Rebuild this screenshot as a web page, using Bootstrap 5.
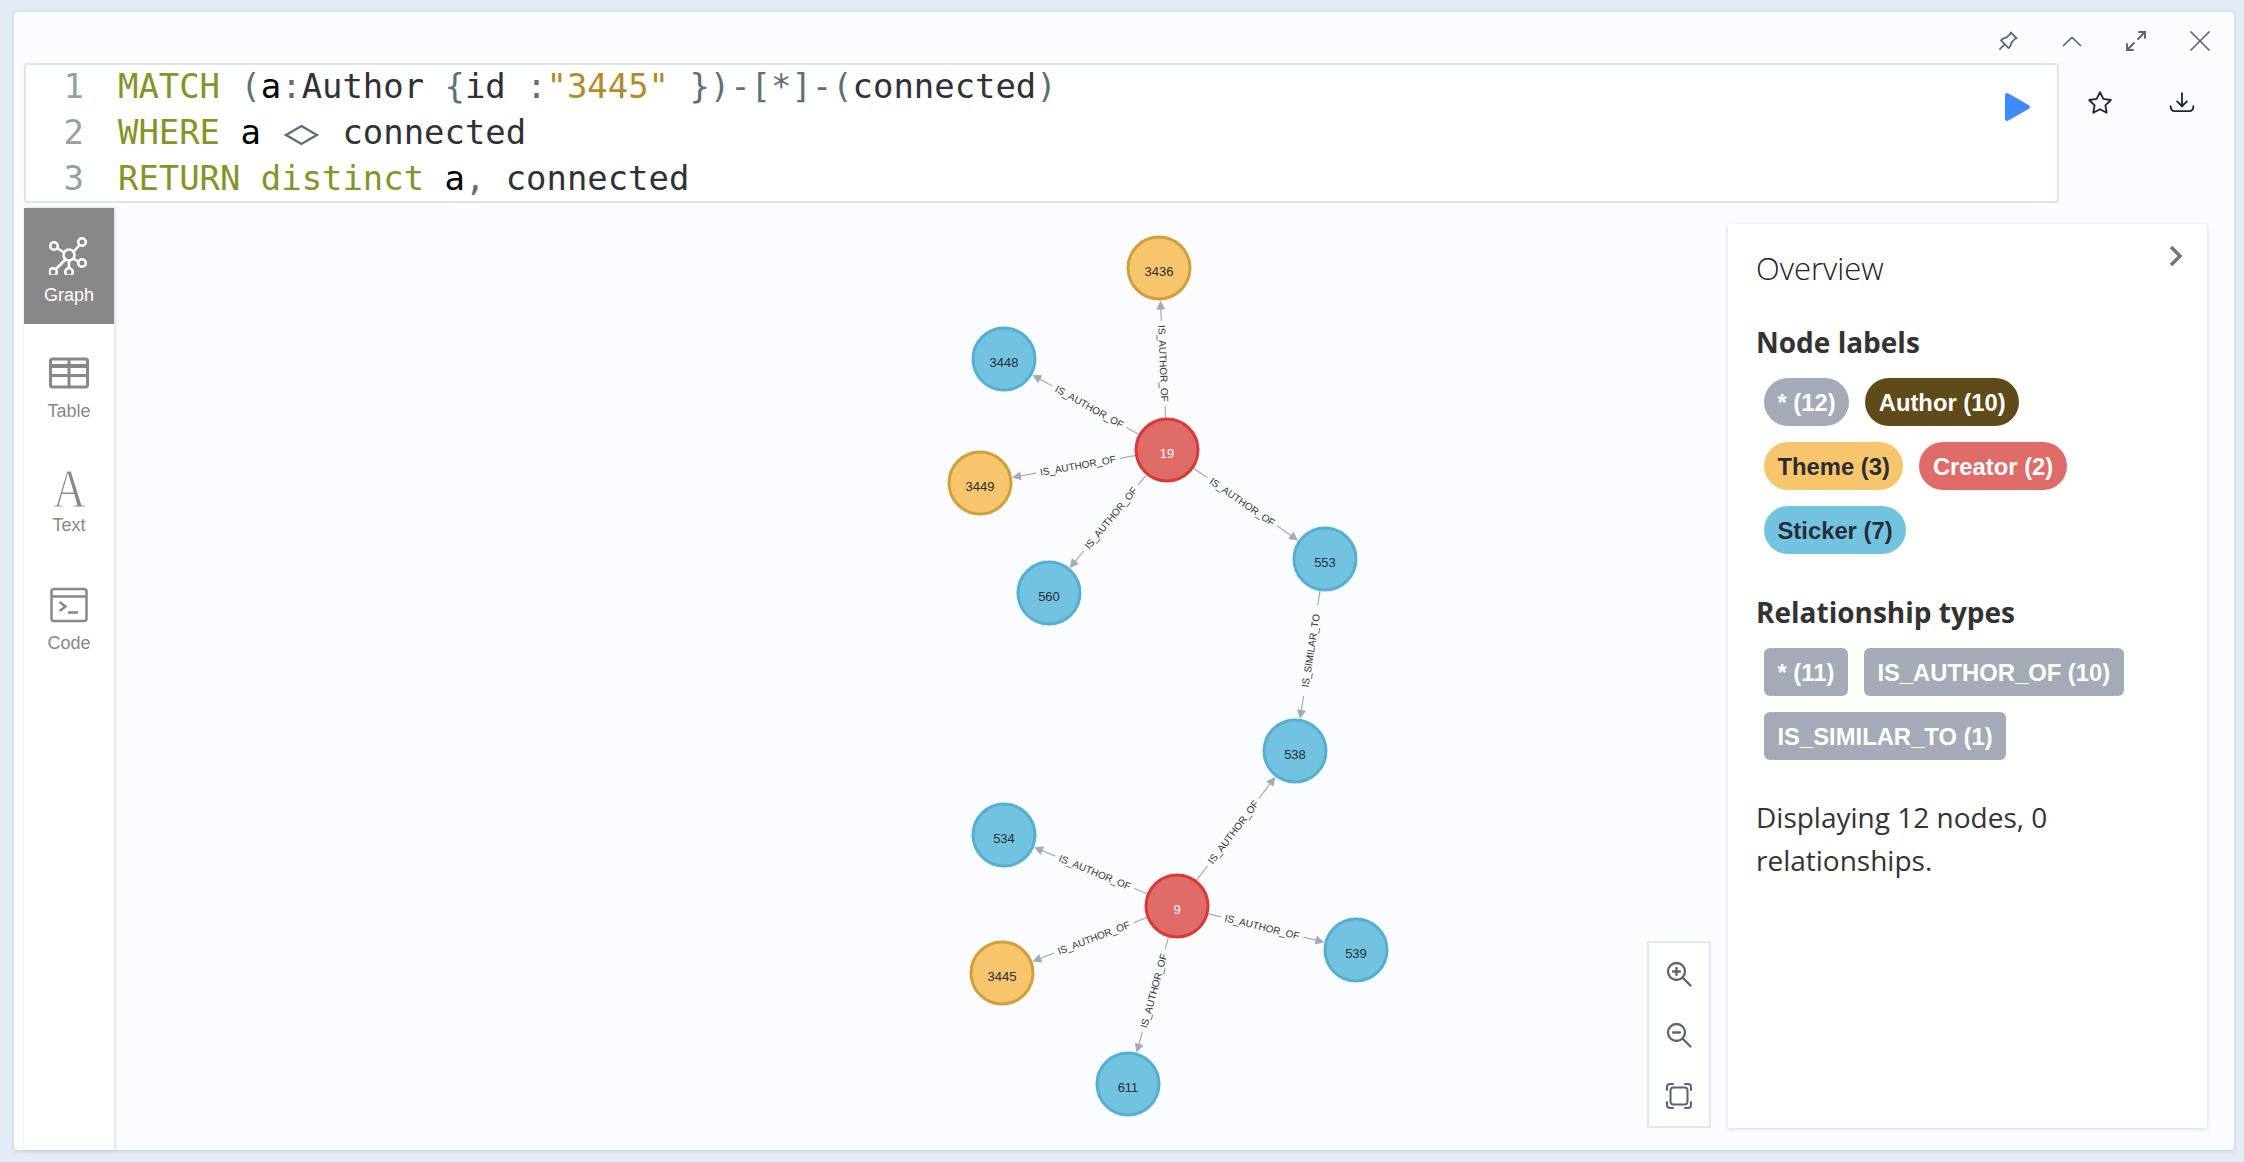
<!DOCTYPE html>
<html lang="en">
<head>
<meta charset="UTF-8">
<title>Neo4j Browser</title>
<link rel="stylesheet" href="https://cdn.jsdelivr.net/npm/bootstrap@5.3.3/dist/css/bootstrap.min.css">
<style>
  html, body { height: 100%; }
  body { background: #e3ebf4; overflow: hidden; padding: 12px 10px 12px 14px; font-family: "Open Sans", sans-serif; color: #303236; }
  .frame { height: 1138px; background: #fbfcff; border-radius: 4px; box-shadow: 0 1px 4px rgba(120, 140, 170, .3); }
  .top-bar { height: 51px; padding-right: 2px; }
  .top-btn { width: 64px; height: 51px; padding-top: 7px; color: #5b6470; }
  .editor-row { height: 140px; }
  .editor { width: 2035px; margin-left: 10px; height: 140px; background: #fff; border: 2px solid #dbe5f0; border-radius: 3px; overflow: hidden; font-family: "DejaVu Sans Mono", monospace; font-size: 33.9px; line-height: 46px; white-space: pre; }
  .code-col { margin-top: -1px; }
  .gutter { width: 58px; text-align: right; color: #93a1a1; margin-right: 34px; }
  .run-btn { width: 76px; padding-top: 26px; padding-right: 4px; }
  .tk-k { color: #859426; }
  .tk-s { color: #b58a2a; }
  .tk-p { color: #5d7078; }
  .tk-v { color: #000; }
  .tk-t { color: #2f3136; }
  .side-actions { width: 175px; }
  .side-btn { width: 82px; height: 80px; color: #1f2630; }
  .body-row { margin-top: 5px; height: 942px; }
  .side-nav { width: 90px; margin-left: 10px; background: #fff; box-shadow: 1px 0 3px rgba(120, 140, 170, .3); }
  .side-tab { height: 116px; padding-top: 27px; color: #888; font-family: "Liberation Sans", sans-serif; font-size: 18px; line-height: 20px; }
  .side-tab.on { background: #888; color: #fff; }
  .side-tab svg { display: block; }
  .tab-lbl { margin-top: 10px; }
  .glyph-a { height: 40px; font-family: "Liberation Serif", serif; font-size: 54px; line-height: 44px; -webkit-text-stroke: .9px #fff; transform: scaleX(.84); }
  .glyph-a + .tab-lbl { margin-top: 8px; }
  .canvas-area { min-width: 0; }
  .graph-svg { position: absolute; left: 0; top: 0; width: 100%; height: 100%; }
  .zoom-bar { position: absolute; right: 17px; bottom: 22px; width: 64px; height: 187px; background: #fff; border: 2px solid #dfe7f1; padding: 0; }
  .zoom-bar > div { height: 62px; color: #5b6470; }
  .overview { width: 479px; margin: 16px 27px 22px 0; background: #fff; border: 0; border-radius: 0; box-shadow: 0 1px 4px rgba(120, 140, 170, .3); padding: 24px 40px 0 28px; }
  .ov-title { font-size: 31px; font-weight: 300; line-height: 40px; margin: 0; color: #222; }
  .ov-head { font-size: 28px; font-weight: 700; line-height: 36px; margin: 0; color: #333; }
  .first-head { margin-top: 36px; }
  .second-head { margin-top: 40px; }
  .pill-wrap { margin: 18px 0 0 8px; gap: 16px; }
  .tag-pill { font-family: "Liberation Sans", sans-serif; font-size: 23.8px; font-weight: 700; line-height: 49px; height: 48px; padding: 0 13.5px; border-radius: 24px; white-space: nowrap; }
  .tag-rel { border-radius: 6px; }
  .c-grey { background: #a5abb6; color: #fff; }
  .c-brown { background: #5f4a1a; color: #fff; }
  .c-orange { background: #f7c56b; color: #2a2c34; }
  .c-red { background: #e06c6a; color: #fff; }
  .c-blue { background: #72c3e0; color: #2a2c34; }
  .ov-note { font-size: 28px; line-height: 43px; margin: 36px 0 0; color: #333; }
  .ov-toggle { position: absolute; right: 23px; top: 20px; color: #777; }
</style>
</head>
<body>
<main class="frame d-flex flex-column">
  <!-- window buttons -->
  <div class="top-bar d-flex justify-content-end align-items-center">
    <div class="top-btn d-flex align-items-center justify-content-center">
      <svg width="26" height="26" viewBox="0 0 24 24" fill="none" stroke="currentColor" stroke-width="1.6" stroke-linecap="round" stroke-linejoin="round"><path d="M15 4.5l-4 4l-4 1.5l-1.5 1.5l7 7l1.500 -1.500l1.500 -4l4 -4"/><path d="M9 15l-4.500 4.500"/><path d="M14.500 4l5.500 5.500"/></svg>
    </div>
    <div class="top-btn d-flex align-items-center justify-content-center">
      <svg width="24" height="24" viewBox="0 0 24 24" fill="none" stroke="currentColor" stroke-width="1.7" stroke-linecap="round"><path d="M3.500 16.500l8.500 -8l8.500 8"/></svg>
    </div>
    <div class="top-btn d-flex align-items-center justify-content-center">
      <svg width="24" height="24" viewBox="0 0 24 24" fill="none" stroke="currentColor" stroke-width="1.9" stroke-linecap="round"><path d="M15 3h6v6"/><path d="M14 10l7 -7"/><path d="M9 21h-6v-6"/><path d="M3 21l7 -7"/></svg>
    </div>
    <div class="top-btn d-flex align-items-center justify-content-center">
      <svg width="24" height="24" viewBox="0 0 24 24" fill="none" stroke="currentColor" stroke-width="1.700" stroke-linecap="round"><path d="M3 3l18 18"/><path d="M21 3l-18 18"/></svg>
    </div>
  </div>

  <!-- query editor -->
  <div class="editor-row d-flex">
    <div class="editor d-flex position-relative">
      <div class="gutter code-col">1
2
3</div>
      <div class="flex-grow-1 code-col"><span class="tk-k">MATCH</span> <span class="tk-p">(</span><span class="tk-v">a</span><span class="tk-p">:</span><span class="tk-t">Author</span> <span class="tk-p">{</span><span class="tk-t">id</span> <span class="tk-p">:</span><span class="tk-s">"3445"</span> <span class="tk-p">})-[*]-(</span><span class="tk-t">connected</span><span class="tk-p">)</span>
<span class="tk-k">WHERE</span> <span class="tk-v">a</span> <svg width="40.8" height="22" viewBox="0 0 41 22" fill="none" stroke="#5d7078" stroke-width="2.400"><path d="M20.500 2l15.500 9l-15.500 9l-15.500 -9z"/></svg> <span class="tk-t">connected</span>
<span class="tk-k">RETURN distinct</span> <span class="tk-v">a</span><span class="tk-p">,</span> <span class="tk-t">connected</span></div>
      <div class="run-btn d-flex align-items-start justify-content-center">
        <svg width="30" height="32" viewBox="0 0 30 32"><path d="M5 4l21 12l-21 12z" fill="#3f8bfb" stroke="#3f8bfb" stroke-width="4" stroke-linejoin="round"/></svg>
      </div>
    </div>
    <div class="side-actions d-flex align-items-start">
      <div class="side-btn d-flex align-items-center justify-content-center">
        <svg width="26" height="26" viewBox="0 0 24 24" fill="none" stroke="currentColor" stroke-width="1.700" stroke-linejoin="round"><path d="M12 17.750l-6.172 3.245l1.179 -6.873l-5 -4.867l6.900 -1l3.086 -6.253l3.086 6.253l6.900 1l-5 4.867l1.179 6.873z"/></svg>
      </div>
      <div class="side-btn d-flex align-items-center justify-content-center">
        <svg width="26" height="26" viewBox="0 0 24 24" fill="none" stroke="currentColor" stroke-width="1.700" stroke-linecap="round" stroke-linejoin="round"><path d="M1.500 15c0 3 1.500 4.500 4 4.500h13c2.500 0 4 -1.500 4 -4.500"/><path d="M12 3v12"/><path d="M7.500 10.500l4.500 4.500l4.500 -4.500"/></svg>
      </div>
    </div>
  </div>

  <div class="body-row d-flex">
    <!-- view switcher -->
    <nav class="side-nav flex-shrink-0">
      <div class="side-tab on d-flex flex-column align-items-center">
        <svg width="40" height="40" viewBox="0 0 40 40" fill="none" stroke="currentColor" stroke-width="2.600"><circle cx="20" cy="20" r="5.500"/><circle cx="5" cy="11" r="3.800"/><circle cx="33" cy="7" r="3.800"/><circle cx="33" cy="28" r="3.800"/><circle cx="20" cy="37" r="3.800"/><circle cx="4" cy="37" r="3.800"/><path d="M8 13l8 5M30.500 10l-6.500 7.500M30 27l-5 -3M20 33v-7M7 34l9.500 -9.500"/></svg>
        <div class="tab-lbl">Graph</div>
      </div>
      <div class="side-tab d-flex flex-column align-items-center">
        <svg width="40" height="40" viewBox="0 0 40 40" fill="none" stroke="currentColor"><rect x="1.500" y="8" width="37" height="28" rx="2" stroke-width="3"/><path d="M1 15h38" stroke-width="4"/><path d="M1 24.500h38M20 8v28" stroke-width="3"/></svg>
        <div class="tab-lbl">Table</div>
      </div>
      <div class="side-tab d-flex flex-column align-items-center">
        <div class="glyph-a">A</div>
        <div class="tab-lbl">Text</div>
      </div>
      <div class="side-tab d-flex flex-column align-items-center">
        <svg width="40" height="40" viewBox="0 0 40 40" fill="none" stroke="currentColor" stroke-width="2.500"><rect x="2.500" y="6" width="35" height="32" rx="2.500"/><path d="M2.500 13.500h35"/><path d="M10.500 19l6 4.500l-6 4.500M19 29.500h10"/></svg>
        <div class="tab-lbl">Code</div>
      </div>
    </nav>

    <!-- graph canvas -->
    <section class="canvas-area flex-grow-1 position-relative">
      <svg id="graph" class="graph-svg" viewBox="114 208 1614 942" preserveAspectRatio="xMinYMin meet" xmlns="http://www.w3.org/2000/svg"></svg>
      <div class="zoom-bar d-flex flex-column justify-content-center">
        <div class="d-flex align-items-center justify-content-center">
          <svg width="28" height="28" viewBox="0 0 28 28" fill="none" stroke="currentColor" stroke-width="2.300" stroke-linecap="round"><circle cx="11.500" cy="11.500" r="8.500"/><path d="M17.500 17.500l8 8M8 11.500h7M11.500 8v7"/></svg>
        </div>
        <div class="d-flex align-items-center justify-content-center">
          <svg width="28" height="28" viewBox="0 0 28 28" fill="none" stroke="currentColor" stroke-width="2.300" stroke-linecap="round"><circle cx="11.500" cy="11.500" r="8.500"/><path d="M17.500 17.500l8 8M8 11.500h7"/></svg>
        </div>
        <div class="d-flex align-items-center justify-content-center">
          <svg width="28" height="28" viewBox="0 0 28 28" fill="none" stroke="currentColor" stroke-width="2" stroke-linecap="round"><rect x="5.500" y="5.500" width="17" height="17" rx="3"/><path d="M2 8v-3a3 3 0 0 1 3 -3h3M20 2h3a3 3 0 0 1 3 3v3M26 20v3a3 3 0 0 1 -3 3h-3M8 26h-3a3 3 0 0 1 -3 -3v-3"/></svg>
        </div>
      </div>
    </section>

    <!-- overview -->
    <aside class="overview card flex-shrink-0 position-relative d-block">
      <svg class="ov-toggle" width="16" height="24" viewBox="0 0 16 24" fill="none" stroke="currentColor" stroke-width="3.500"><path d="M3 3l9 9l-9 9"/></svg>
      <h2 class="ov-title">Overview</h2>
      <h3 class="ov-head first-head">Node labels</h3>
      <div class="pill-wrap d-flex flex-wrap">
        <span class="tag-pill c-grey">* (12)</span>
        <span class="tag-pill c-brown">Author (10)</span>
        <span class="tag-pill c-orange">Theme (3)</span>
        <span class="tag-pill c-red">Creator (2)</span>
        <span class="tag-pill c-blue">Sticker (7)</span>
      </div>
      <h3 class="ov-head second-head">Relationship types</h3>
      <div class="pill-wrap d-flex flex-wrap">
        <span class="tag-pill tag-rel c-grey">* (11)</span>
        <span class="tag-pill tag-rel c-grey">IS_AUTHOR_OF (10)</span>
        <span class="tag-pill tag-rel c-grey">IS_SIMILAR_TO (1)</span>
      </div>
      <p class="ov-note">Displaying 12 nodes, 0 relationships.</p>
    </aside>
  </div>
</main>

<script src="https://cdn.jsdelivr.net/npm/bootstrap@5.3.3/dist/js/bootstrap.bundle.min.js"></script>
<script>
  // node centres are in page pixels, the svg viewBox starts at the canvas corner
  var kinds = {
    o: ["#f7c56b", "#cfa03c", "#2a2c34"],
    b: ["#72c3e0", "#55afd3", "#2a2c34"],
    r: ["#e06c6a", "#d83a38", "#ffffff"]
  };
  var nodes = {
    3436: [1159, 268, "o"], 3448: [1004, 359, "b"], 19: [1167, 450, "r"], 3449: [980, 483, "o"],
    560: [1049, 593, "b"], 553: [1325, 559, "b"], 538: [1295, 751, "b"], 534: [1004, 835, "b"],
    9: [1177, 906, "r"], 3445: [1002, 973, "o"], 539: [1356, 950, "b"], 611: [1128, 1084, "b"]
  };
  var edges = [
    [19, 3436], [19, 3448], [19, 3449], [19, 560], [19, 553],
    [553, 538, "IS_SIMILAR_TO"],
    [9, 538], [9, 534], [9, 3445], [9, 611], [9, 539]
  ];
  var R = 32.5, out = "";

  edges.forEach(function (e) {
    var a = nodes[e[0]], b = nodes[e[1]];
    var dx = b[0] - a[0], dy = b[1] - a[1], len = Math.hypot(dx, dy);
    var ux = dx / len, uy = dy / len;
    var label = e[2] || "IS_AUTHOR_OF";
    var half = (label.length === 13 ? 41 : 37.5) + 5;
    var shaftEnd = len - R - 9, mid = (R + shaftEnd) / 2;
    var p = function (t, off) {
      off = off || 0;
      return (a[0] + ux * t - uy * off).toFixed(1) + " " + (a[1] + uy * t + ux * off).toFixed(1);
    };
    out += '<path d="M' + p(R) + "L" + p(mid - half) + "M" + p(mid + half) + "L" + p(shaftEnd + 1) + '" stroke="#a5abb6" stroke-width="1.2" fill="none"/>';
    out += '<path d="M' + p(len - R) + "L" + p(shaftEnd, 4.5) + "L" + p(shaftEnd, -4.5) + 'z" fill="#a5abb6"/>';
    var ang = Math.atan2(dy, dx) * 180 / Math.PI;
    if (dx < 0) ang += 180;
    var c = p(mid).split(" ");
    out += '<text transform="translate(' + c[0] + " " + c[1] + ") rotate(" + ang.toFixed(1) + ')" text-anchor="middle" dominant-baseline="central" font-family="Liberation Sans, sans-serif" font-size="10" fill="#333">' + label + "</text>";
  });

  Object.keys(nodes).forEach(function (id) {
    var n = nodes[id], k = kinds[n[2]];
    out += '<circle cx="' + n[0] + '" cy="' + n[1] + '" r="' + (R - 1.5) + '" fill="' + k[0] + '" stroke="' + k[1] + '" stroke-width="3"/>';
    out += '<text x="' + n[0] + '" y="' + (n[1] + 3) + '" text-anchor="middle" dominant-baseline="central" font-family="Liberation Sans, sans-serif" font-size="13" fill="' + k[2] + '">' + id + "</text>";
  });
  document.getElementById("graph").innerHTML = out;
</script>
</body>
</html>
